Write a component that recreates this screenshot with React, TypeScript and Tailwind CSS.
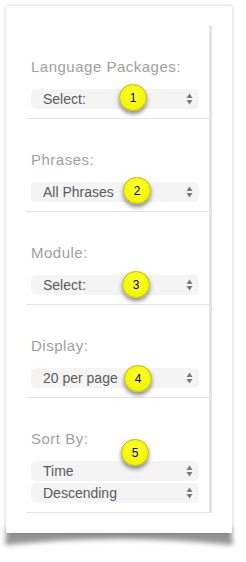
import React from 'react';

type Field = {
  label: string;
  values: string[];
};

const FIELDS: Field[] = [
  { label: 'Language Packages:', values: ['Select:'] },
  { label: 'Phrases:', values: ['All Phrases'] },
  { label: 'Module:', values: ['Select:'] },
  { label: 'Display:', values: ['20 per page'] },
  { label: 'Sort By:', values: ['Time', 'Descending'] },
];

// badge spots, relative to the card
const BADGES = [
  { n: '1', className: 'left-[113px] top-[78px]' },
  { n: '2', className: 'left-[117px] top-[171px]' },
  { n: '3', className: 'left-[116px] top-[265px]' },
  { n: '4', className: 'left-[118px] top-[359px]' },
  { n: '5', className: 'left-[115px] top-[433px]' },
];

const Arrows = () => (
  <svg width="7" height="12" viewBox="0 0 7 12" className="shrink-0">
    <path d="M3.5 0.5 L6.5 5 L0.5 5 Z" fill="#7a7a7a" />
    <path d="M3.5 11.5 L6.5 7 L0.5 7 Z" fill="#7a7a7a" />
  </svg>
);

const SelectBox = ({ value }: { value: string }) => (
  <div className="flex h-[20px] w-[168px] items-center justify-between rounded-[5px] bg-[#f4f4f4] pl-[12px] pr-[6px] text-[14px] leading-none text-[#5a5a5a]">
    <span>{value}</span>
    <Arrows />
  </div>
);

const Badge = ({ n, className }: { n: string; className: string }) => (
  <div
    className={`absolute ${className} z-10 flex h-[27px] w-[28px] items-center justify-center rounded-full border border-[#b9b900] bg-[radial-gradient(circle_at_50%_40%,#ffff3a,#f4f400_70%,#d9d900)] text-[12px] text-black shadow-[0_3px_4px_rgba(0,0,0,0.45)]`}
  >
    {n}
  </div>
);

export default function App() {
  return (
    <div className="min-h-[562px] w-[246px] bg-white pl-[6px] pt-[6px] font-['Liberation_Sans',Arial,sans-serif]">
      <div className="relative w-[226px]">
        {/* curled page shadow */}
        <svg
          width="240"
          height="30"
          viewBox="0 0 240 30"
          className="pointer-events-none absolute left-[-7px] top-[515px]"
        >
          <defs>
            <filter id="blur" x="-10%" y="-50%" width="120%" height="200%">
              <feGaussianBlur stdDeviation="2.5" />
            </filter>
          </defs>
          <path
            d="M8 6 L232 6 L234 24 Q120 12 6 24 Z"
            fill="rgba(0,0,0,0.42)"
            filter="url(#blur)"
          />
        </svg>

        <div className="relative h-[527px] bg-white pl-[20px] pt-[20px] shadow-[0_0_4px_rgba(0,0,0,0.2)]">
          <div className="w-[186px] border-r-[3px] border-[#e3e3e3]">
            {FIELDS.map((f) => (
              <div key={f.label} className="border-b border-[#e3e3e3] pb-[9px] pl-[5px] pt-[32px]">
                <div className="h-[18px] text-[15px] leading-[18px] tracking-[0.5px] text-[#a0a0a0]">
                  {f.label}
                </div>
                <div className="mt-[13px] flex flex-col gap-[2px]">
                  {f.values.map((v) => (
                    <SelectBox key={v} value={v} />
                  ))}
                </div>
              </div>
            ))}
          </div>

          {BADGES.map((b) => (
            <Badge key={b.n} n={b.n} className={b.className} />
          ))}
        </div>
      </div>
    </div>
  );
}
